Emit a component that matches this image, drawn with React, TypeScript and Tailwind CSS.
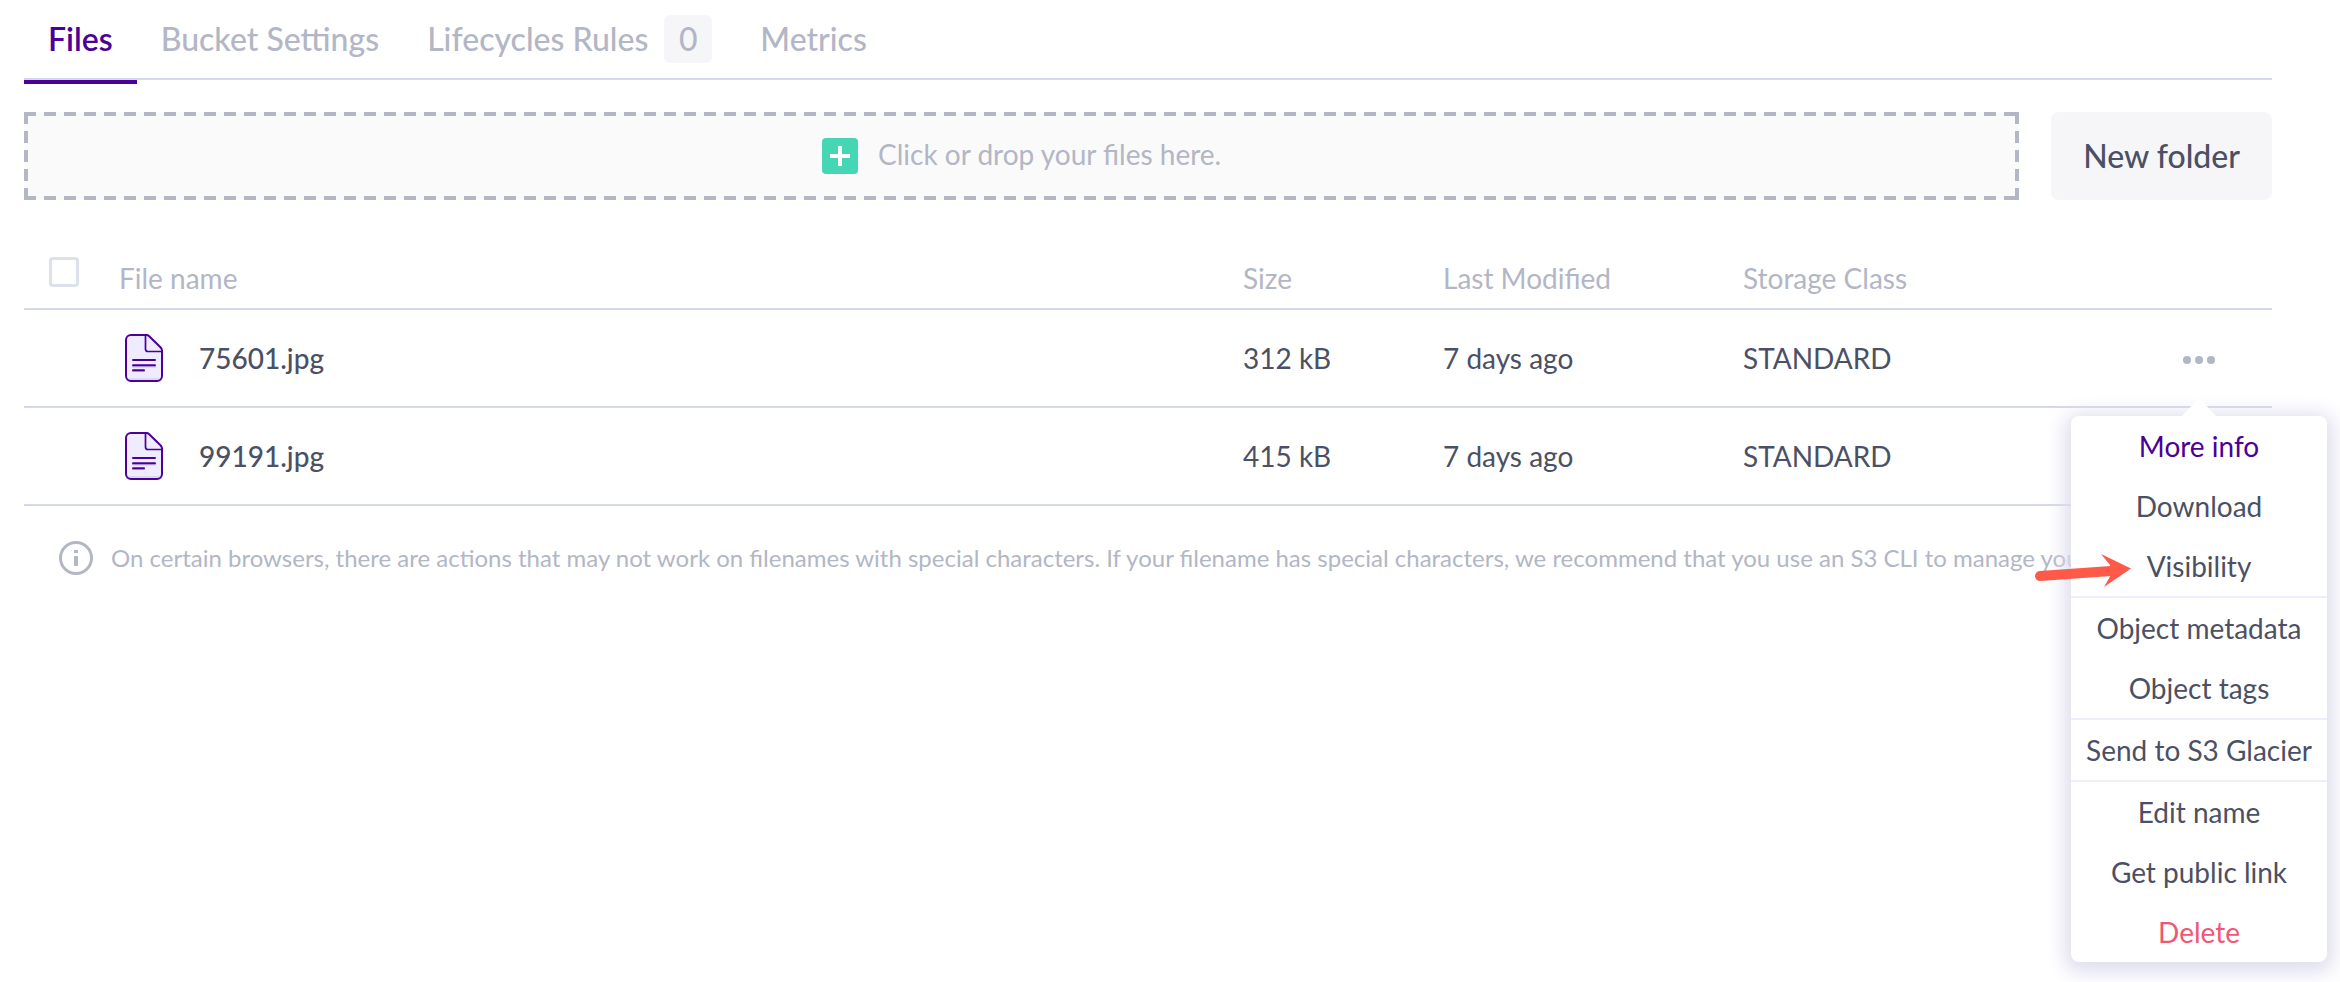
import type { ReactNode } from "react";

type FileEntry = { name: string; size: string; modified: string; storage: string };

const files: FileEntry[] = [
  { name: "75601.jpg", size: "312 kB", modified: "7 days ago", storage: "STANDARD" },
  { name: "99191.jpg", size: "415 kB", modified: "7 days ago", storage: "STANDARD" },
];

const menuGroups = [
  ["More info", "Download", "Visibility"],
  ["Object metadata", "Object tags"],
  ["Send to S3 Glacier"],
  ["Edit name", "Get public link", "Delete"],
];

const menuColors: Record<string, string> = {
  "More info": "text-[#4b0097]",
  Delete: "text-[#ef5774]",
};

function FileIcon() {
  return (
    <svg className="block h-12 w-[38px]" viewBox="0 0 38 48" fill="none" aria-hidden="true">
      <path d="M6 1H21.5Q23 1 24.2 2.2L35.5 13.3Q37 14.8 37 16.5V42a5 5 0 0 1-5 5H6a5 5 0 0 1-5-5V6a5 5 0 0 1 5-5Z" fill="#eeecfe" />
      <path d="M2 44H36V46H2Z" fill="#dedaf5" />
      <path d="M6 1H21.5Q23 1 24.2 2.2L35.5 13.3Q37 14.8 37 16.5V42a5 5 0 0 1-5 5H6a5 5 0 0 1-5-5V6a5 5 0 0 1 5-5Z" stroke="#4b0097" strokeWidth="2" />
      <path d="M20.5 1.5V15a2.5 2.5 0 0 0 2.5 2.5H36.5" stroke="#4b0097" strokeWidth="1.7" />
      <path d="M7 32.8H31M7 37.5H20" stroke="#c4aee4" strokeWidth="1" />
      <path d="M8 26H30M8 31.2H30M8 36.3H19" stroke="#4b0097" strokeWidth="2" strokeLinecap="round" />
    </svg>
  );
}

function InfoIcon() {
  return (
    <svg className="block size-[34px] shrink-0" viewBox="0 0 34 34" fill="none" aria-hidden="true">
      <circle cx="17" cy="17" r="15.5" stroke="#b2b6c5" strokeWidth="3" />
      <path d="M15 9h4v3h-4zM15 15h4v10h-4z" fill="#b2b6c5" />
    </svg>
  );
}

function Tab({ active = false, children }: { active?: boolean; children: ReactNode }) {
  return (
    <button
      type="button"
      role="tab"
      aria-selected={active}
      className={
        active
          ? "-mb-1.5 flex items-center border-b-4 border-[#4b0097] px-6 pb-0.5 font-semibold text-[#4b0097]"
          : "flex items-center gap-4 px-6 font-medium"
      }
    >
      {children}
    </button>
  );
}

function ActionMenu() {
  return (
    <div
      role="menu"
      className="absolute top-[72px] left-1/2 z-10 w-64 -translate-x-1/2 rounded-lg bg-white shadow-[0_4px_20px_6px_#dddcee]"
    >
      <svg className="absolute -top-[18px] left-1/2 h-[19px] w-9 -translate-x-1/2" viewBox="0 0 36 19" aria-hidden="true">
        <path d="M0 19L18 0L36 19Z" fill="#fff" />
      </svg>
      {menuGroups.map((group) => (
        <div key={group[0]} className="border-b-2 border-[#eeeefd] last:border-b-0">
          {group.map((item) => (
            <button
              key={item}
              type="button"
              role="menuitem"
              className={`flex h-[60px] w-full items-center justify-center text-[28px] whitespace-nowrap ${menuColors[item] ?? "text-[#4b5064]"}`}
            >
              {item}
            </button>
          ))}
        </div>
      ))}
    </div>
  );
}

function Pointer() {
  return (
    <svg className="absolute top-[208px] right-full z-20 mr-[50px] h-9 w-[100px]" viewBox="0 0 100 36" aria-hidden="true">
      <path d="M7 24L78 19" stroke="#ff594a" strokeWidth="10" strokeLinecap="round" />
      <path d="M68 2L98 16.500L71 35L77 24.500V13Z" fill="#ff594a" />
    </svg>
  );
}

export default function App() {
  const head = "border-b-2 border-[#d5d8e8] p-0 pt-12 text-left font-normal text-[#b2b6c5]";
  const cell = "h-[98px] border-b-2 border-[#d5d8e8] p-0";
  return (
    <main className="min-h-screen bg-white pr-[68px] pl-6 font-[Lato,sans-serif] text-[28px] leading-10 text-[#4b5064]">
      <nav role="tablist" className="flex h-20 border-b-2 border-[#d5d8e8] text-[32px] text-[#b2b6c5]">
        <Tab active>Files</Tab>
        <Tab>Bucket Settings</Tab>
        <Tab>
          Lifecycles Rules
          <span className="flex h-12 w-12 items-center justify-center rounded-md bg-[#f6f6f9]">0</span>
        </Tab>
        <Tab>Metrics</Tab>
      </nav>

      <div className="mt-8 flex gap-8">
        <button
          type="button"
          className="flex h-[88px] flex-1 items-center justify-center gap-5 bg-[#fafafa] [background-image:repeating-linear-gradient(90deg,#b2b6c5_0_12px,transparent_12px_20px),repeating-linear-gradient(90deg,#b2b6c5_0_12px,transparent_12px_20px),repeating-linear-gradient(180deg,#b2b6c5_0_12px,transparent_12px_19px),repeating-linear-gradient(180deg,#b2b6c5_0_12px,transparent_12px_19px)] [background-position:0_0,0_100%,0_0,100%_0] [background-size:100%_4px,100%_4px,4px_100%,4px_100%] bg-no-repeat text-[#b2b6c5]"
        >
          <svg className="size-9" viewBox="0 0 36 36" aria-hidden="true">
            <rect width="36" height="36" rx="4" fill="#45d6b5" />
            <path d="M18 8V28M8 18H28" stroke="#fff" strokeWidth="4" />
          </svg>
          <span className="pb-1">Click or drop your files here.</span>
        </button>
        <button type="button" className="h-[88px] rounded-lg bg-[#f6f6f9] px-8 text-[32px] font-medium">
          New folder
        </button>
      </div>

      <table className="w-full table-fixed border-separate border-spacing-0">
        <colgroup>
          <col className="w-[95px]" />
          <col />
          <col className="w-[200px]" />
          <col className="w-[300px]" />
          <col className="w-[383px]" />
          <col className="w-[146px]" />
        </colgroup>
        <thead>
          <tr className="h-[110px]">
            <th className="border-b-2 border-[#d5d8e8] p-0 pt-9 pl-[25px]">
              <input
                type="checkbox"
                aria-label="Select all files"
                className="block size-[30px] appearance-none rounded border-3 border-[#dde1ec]"
              />
            </th>
            <th className={head}>File name</th>
            <th className={head}>Size</th>
            <th className={head}>Last Modified</th>
            <th className={head}>Storage Class</th>
            <th className={head} aria-label="Actions" />
          </tr>
        </thead>
        <tbody>
          {files.map((file, index) => (
            <tr key={file.name}>
              <td className={cell} />
              <td className={cell}>
                <div className="flex items-center gap-9 pl-1.5 font-medium">
                  <FileIcon />
                  {file.name}
                </div>
              </td>
              <td className={cell}>{file.size}</td>
              <td className={cell}>{file.modified}</td>
              <td className={cell}>{file.storage}</td>
              <td className="h-[98px] border-b-2 border-[#d5d8e8] p-0 pt-1">
                {index === 0 && (
                  <div className="relative mx-auto w-8">
                    <button type="button" aria-label="File actions" className="flex h-8 w-8 items-center gap-1">
                      <span className="size-2 rounded-full bg-[#b2b6c5]" />
                      <span className="size-2 rounded-full bg-[#b2b6c5]" />
                      <span className="size-2 rounded-full bg-[#b2b6c5]" />
                    </button>
                    <ActionMenu />
                    <Pointer />
                  </div>
                )}
              </td>
            </tr>
          ))}
        </tbody>
      </table>

      <p className="flex items-center gap-[18px] pt-8 pl-[35px] text-2xl leading-10 whitespace-nowrap text-[#b2b6c5]">
        <InfoIcon />
        On certain browsers, there are actions that may not work on filenames with special characters. If your filename
        has special characters, we recommend that you use an S3 CLI to manage your files.
      </p>
    </main>
  );
}
